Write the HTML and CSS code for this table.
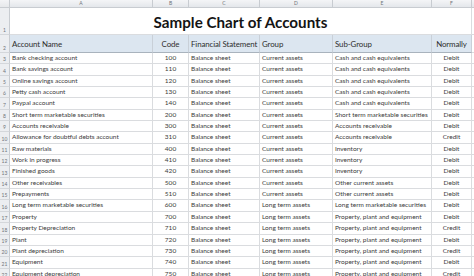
FILE: index.html
```html
<!DOCTYPE html>
<html>
<head>
<meta charset="utf-8">
<link rel="stylesheet" href="styles.css">
</head>
<body>
<div class="sheet">
  <div class="corner"></div>
  <div class="colh">A</div><div class="colh">B</div><div class="colh">C</div><div class="colh">D</div><div class="colh">E</div><div class="colh">F</div><div class="colh tail"></div>

  <div class="rowh">1</div>
  <div class="title">Sample Chart of Accounts</div>
  <div class="cell tail"></div>

  <div class="rowh">2</div>
  <div class="hd">Account Name</div><div class="hd c">Code</div><div class="hd">Financial Statement</div><div class="hd">Group</div><div class="hd">Sub-Group</div><div class="hd c">Normally</div><div class="cell tail"></div>

  <div class="rowh">3</div><div class="cell">Bank checking account</div><div class="cell c">100</div><div class="cell">Balance sheet</div><div class="cell">Current assets</div><div class="cell">Cash and cash equivalents</div><div class="cell c">Debit</div><div class="cell tail"></div>
  <div class="rowh">4</div><div class="cell">Bank savings account</div><div class="cell c">110</div><div class="cell">Balance sheet</div><div class="cell">Current assets</div><div class="cell">Cash and cash equivalents</div><div class="cell c">Debit</div><div class="cell tail"></div>
  <div class="rowh">5</div><div class="cell">Online savings account</div><div class="cell c">120</div><div class="cell">Balance sheet</div><div class="cell">Current assets</div><div class="cell">Cash and cash equivalents</div><div class="cell c">Debit</div><div class="cell tail"></div>
  <div class="rowh">6</div><div class="cell">Petty cash account</div><div class="cell c">130</div><div class="cell">Balance sheet</div><div class="cell">Current assets</div><div class="cell">Cash and cash equivalents</div><div class="cell c">Debit</div><div class="cell tail"></div>
  <div class="rowh">7</div><div class="cell">Paypal account</div><div class="cell c">140</div><div class="cell">Balance sheet</div><div class="cell">Current assets</div><div class="cell">Cash and cash equivalents</div><div class="cell c">Debit</div><div class="cell tail"></div>
  <div class="rowh">8</div><div class="cell">Short term marketable securities</div><div class="cell c">200</div><div class="cell">Balance sheet</div><div class="cell">Current assets</div><div class="cell">Short term marketable securities</div><div class="cell c">Debit</div><div class="cell tail"></div>
  <div class="rowh">9</div><div class="cell">Accounts receivable</div><div class="cell c">300</div><div class="cell">Balance sheet</div><div class="cell">Current assets</div><div class="cell">Accounts receivable</div><div class="cell c">Debit</div><div class="cell tail"></div>
  <div class="rowh">10</div><div class="cell">Allowance for doubtful debts account</div><div class="cell c">310</div><div class="cell">Balance sheet</div><div class="cell">Current assets</div><div class="cell">Accounts receivable</div><div class="cell c">Credit</div><div class="cell tail"></div>
  <div class="rowh">11</div><div class="cell">Raw materials</div><div class="cell c">400</div><div class="cell">Balance sheet</div><div class="cell">Current assets</div><div class="cell">Inventory</div><div class="cell c">Debit</div><div class="cell tail"></div>
  <div class="rowh">12</div><div class="cell">Work in progress</div><div class="cell c">410</div><div class="cell">Balance sheet</div><div class="cell">Current assets</div><div class="cell">Inventory</div><div class="cell c">Debit</div><div class="cell tail"></div>
  <div class="rowh">13</div><div class="cell">Finished goods</div><div class="cell c">420</div><div class="cell">Balance sheet</div><div class="cell">Current assets</div><div class="cell">Inventory</div><div class="cell c">Debit</div><div class="cell tail"></div>
  <div class="rowh">14</div><div class="cell">Other receivables</div><div class="cell c">500</div><div class="cell">Balance sheet</div><div class="cell">Current assets</div><div class="cell">Other current assets</div><div class="cell c">Debit</div><div class="cell tail"></div>
  <div class="rowh">15</div><div class="cell">Prepayments</div><div class="cell c">510</div><div class="cell">Balance sheet</div><div class="cell">Current assets</div><div class="cell">Other current assets</div><div class="cell c">Debit</div><div class="cell tail"></div>
  <div class="rowh">16</div><div class="cell">Long term marketable securities</div><div class="cell c">600</div><div class="cell">Balance sheet</div><div class="cell">Long term assets</div><div class="cell">Long term marketable securities</div><div class="cell c">Debit</div><div class="cell tail"></div>
  <div class="rowh">17</div><div class="cell">Property</div><div class="cell c">700</div><div class="cell">Balance sheet</div><div class="cell">Long term assets</div><div class="cell">Property, plant and equipment</div><div class="cell c">Debit</div><div class="cell tail"></div>
  <div class="rowh">18</div><div class="cell">Property Depreciation</div><div class="cell c">710</div><div class="cell">Balance sheet</div><div class="cell">Long term assets</div><div class="cell">Property, plant and equipment</div><div class="cell c">Credit</div><div class="cell tail"></div>
  <div class="rowh">19</div><div class="cell">Plant</div><div class="cell c">720</div><div class="cell">Balance sheet</div><div class="cell">Long term assets</div><div class="cell">Property, plant and equipment</div><div class="cell c">Debit</div><div class="cell tail"></div>
  <div class="rowh">20</div><div class="cell">Plant depreciation</div><div class="cell c">730</div><div class="cell">Balance sheet</div><div class="cell">Long term assets</div><div class="cell">Property, plant and equipment</div><div class="cell c">Credit</div><div class="cell tail"></div>
  <div class="rowh">21</div><div class="cell">Equipment</div><div class="cell c">740</div><div class="cell">Balance sheet</div><div class="cell">Long term assets</div><div class="cell">Property, plant and equipment</div><div class="cell c">Debit</div><div class="cell tail"></div>
  <div class="rowh">22</div><div class="cell">Equipment depreciation</div><div class="cell c">750</div><div class="cell">Balance sheet</div><div class="cell">Long term assets</div><div class="cell">Property, plant and equipment</div><div class="cell c">Credit</div><div class="cell tail"></div>
</div>
</body>
</html>
```

FILE: styles.css
```css
html, body {
  margin: 0;
  padding: 0;
  background: #ffffff;
  overflow: hidden;
}
.sheet {
  display: grid;
  grid-template-columns: 10px 143px 36px 71px 73px 99px 40px 2px;
  grid-template-rows: 8px 27px 18px repeat(20, 11.35px);
  font-family: "Lato", "Open Sans", sans-serif;
  color: #3a3a3a;
  width: 474px;
  height: 276px;
  overflow: hidden;
}
.sheet > div {
  box-sizing: border-box;
  overflow: hidden;
  white-space: nowrap;
}
.corner {
  background: linear-gradient(#f3f4f6, #e6e8eb);
  border-right: 1px solid #c8ccd1;
  border-bottom: 1px solid #c8ccd1;
}
.colh {
  background: linear-gradient(#f4f5f7, #e4e7eb);
  border-right: 1px solid #c8ccd1;
  border-bottom: 1px solid #c8ccd1;
  color: #6f7378;
  font-size: 5px;
  line-height: 7px;
  text-align: center;
}
.rowh {
  background: #eceef1;
  border-right: 1px solid #c8ccd1;
  border-bottom: 1px solid #d4d7db;
  color: #6f7378;
  font-size: 5px;
  line-height: 6px;
  display: flex;
  align-items: flex-end;
  justify-content: center;
  padding-bottom: 1px;
}
.title {
  grid-column: 2 / 8;
  border-right: 1px solid #dadcdf;
  border-bottom: 1px solid #dadcdf;
  display: flex;
  align-items: flex-end;
  justify-content: center;
  font-weight: 700;
  font-size: 15.2px;
  color: #141414;
  padding-bottom: 3px;
}
.hd {
  background: #dce6f0;
  border-right: 1px solid #c9d0d8;
  border-bottom: 1px solid #a9b3bd;
  font-size: 7.9px;
  letter-spacing: -0.1px;
  color: #2e2e2e;
  display: flex;
  align-items: flex-end;
  padding: 0 2px 3px 2px;
}
.cell {
  border-right: 1px solid #dadcdf;
  border-bottom: 1px solid #dadcdf;
  font-size: 6.5px;
  line-height: 10px;
  padding: 0 2px;
  color: #3c3c3c;
}
.c {
  text-align: center;
  justify-content: center;
}
.tail {
  padding: 0;
  border-right: none;
}
```
